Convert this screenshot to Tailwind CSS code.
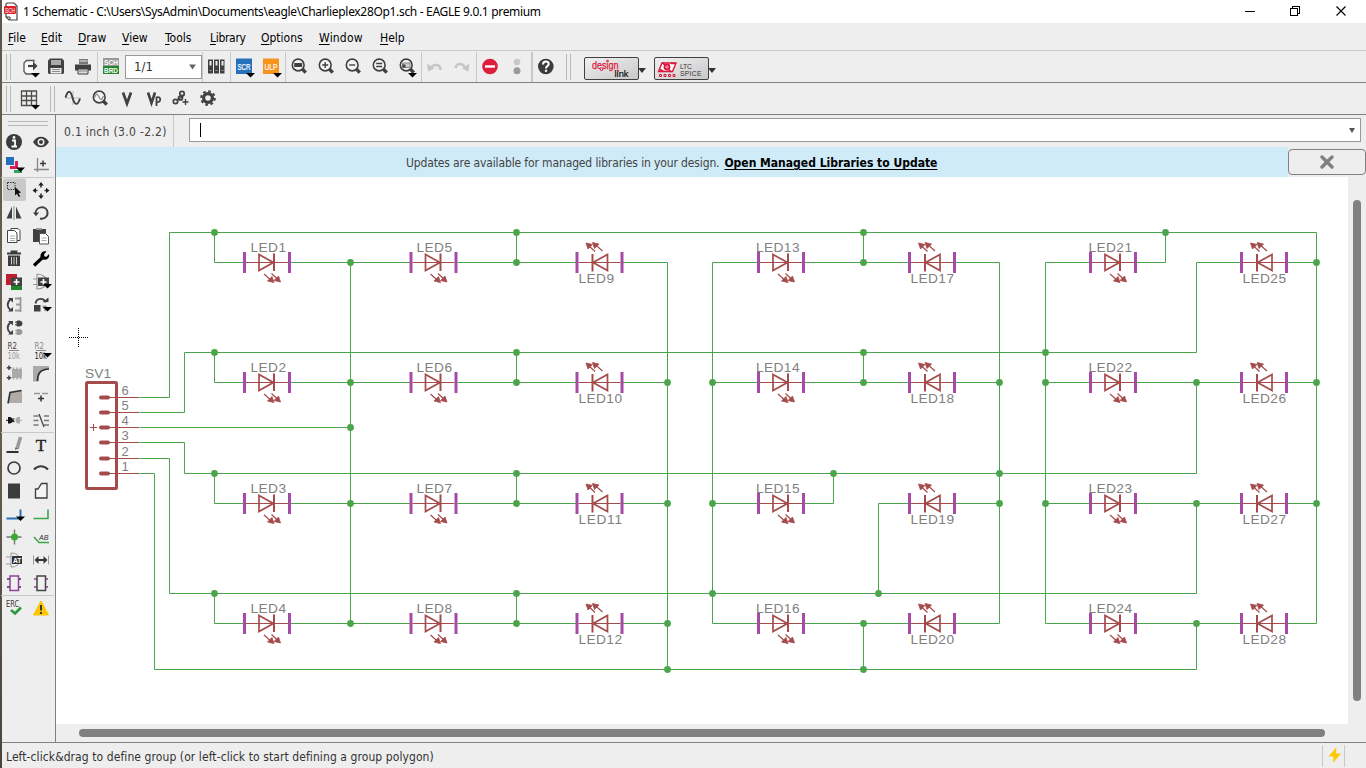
<!DOCTYPE html>
<html lang="en">
<head>
<meta charset="utf-8">
<title>1 Schematic - EAGLE 9.0.1 premium</title>
<script src="https://cdn.jsdelivr.net/npm/@tailwindcss/browser@4"></script>
</head>
<body class="w-[1366px] h-[768px] overflow-hidden bg-[#eeeeee] flex font-['DejaVu_Sans_Condensed','DejaVu_Sans',sans-serif] text-[12px] [font-stretch:condensed] text-black">
<svg width="0" height="0" class="hidden">
  <defs>
    <g id="drop"><path d="M0 0h9l-4.500 4.500z" fill="#000"/></g>
    <g id="lens" fill="none" stroke="#404040"><circle cx="12.200" cy="11.500" r="5.900" stroke-width="1.600" fill="#f4f4f4"/><path d="M16 15.300l3.800 3.800" stroke-width="3.400"/></g>
    <g id="A">
      <path d="M-21 0H21" stroke="#a54b4b"/>
      <path d="M-8-8V8L6.500 0z" fill="none" stroke="#a54b4b" stroke-width="1.700"/>
      <path d="M7-9V8.500" stroke="#a54b4b" stroke-width="2"/>
      <path d="M-3 11.500l9 8M4.500 11l8 7.500" stroke="#a54b4b" stroke-width="1.200"/>
      <path d="M7 20l-6.500-1.500 4.500-4.500zM13.500 19.500l-6.500-1.500 4.500-4.500z" fill="#a54b4b" stroke="#a54b4b" stroke-width=".8"/>
      <path d="M-22.500-10.500v21M22.500-10.500v21" stroke="#a54ba5" stroke-width="3"/>
    </g>
  </defs>
</svg>

<div class="w-[2px] shrink-0 h-full bg-linear-to-b from-[#5d554c] via-[#6b6055] to-[#4b443d]"></div>
<div class="flex flex-col w-[1364px] h-full">

  <header class="h-[23px] shrink-0 bg-white flex items-center pl-[2px]">
    <svg width="16" height="20" viewBox="0 0 16 20"><path d="M3 1h7l3 3v14H5l-3-3V2z" fill="#fff" stroke="#444" stroke-width="1.200"/><path d="M2 15h4v3" fill="none" stroke="#444"/><rect x="0" y="4" width="12" height="8" rx="1" fill="#d9222a"/><text x="1" y="10.500" font-size="6.500" fill="#fff" font-family="Liberation Sans" textLength="10" lengthAdjust="spacingAndGlyphs">SCH</text></svg>
    <span id="title" class="ml-[3px] pt-px font-['Noto_Sans',sans-serif] text-[12px] leading-[22px] whitespace-nowrap tracking-[-0.325px]">1 Schematic - C:\Users\SysAdmin\Documents\eagle\Charlieplex28Op1.sch - EAGLE 9.0.1 premium</span>
    <div class="ml-auto flex">
      <svg width="130" height="22" viewBox="1236 0 130 22" fill="none" stroke="#000" shape-rendering="crispEdges"><path d="M1245 10.500h10M1290.500 7.500h7v7h-7zM1292.500 7v-1.500h7v7h-1.500"/><path d="M1336.500 5.500l9 9M1345.500 5.500l-9 9" shape-rendering="auto" stroke-width="1.200"/></svg>
    </div>
  </header>

  <nav class="h-[28px] shrink-0 flex items-center pl-[6px] pt-[3px] border-b border-[#c8c8c8] underline-offset-2">
    <span class="w-[33px]"><u>F</u>ile</span><span class="w-[37px]"><u>E</u>dit</span><span class="w-[44px]"><u>D</u>raw</span><span class="w-[43px]"><u>V</u>iew</span><span class="w-[45px]"><u>T</u>ools</span><span class="w-[51px] tracking-[-0.3px]"><u>L</u>ibrary</span><span class="w-[58px]"><u>O</u>ptions</span><span class="w-[61px] tracking-[0.2px]"><u>W</u>indow</span><span><u>H</u>elp</span>
  </nav>

  <div class="h-[32px] shrink-0 flex items-center border-b border-[#808080]">
    <div class="ml-[4px] w-[5px] mr-[5px] h-[26px] border-x border-[#b8b8b8]"></div>
    <svg width="27" height="30" viewBox="0 0 27 30"><path d="M18 10V8.500H10.500L8 11v8.500L10 22h7" fill="#fafafa" stroke="#555" stroke-width="1.300"/><path d="M12 14h7" stroke="#404040" stroke-width="2.200"/><path d="M17 9.500l4.500 4.500-4.500 4.500z" fill="#404040"/><use href="#drop" x="15" y="21"/></svg>
    <svg width="27" height="30" viewBox="0 0 27 30"><path d="M7 6.500h12l2 2v12.500l-1 1H6l-1-1V8.500z" fill="#404040"/><path d="M8 8h10v5H8z" fill="#aaa"/><path d="M7.500 16h11v5.500h-11z" fill="#eee"/><path d="M9 17.500h8M9 19.500h8" stroke="#888"/></svg>
    <svg width="27" height="30" viewBox="0 0 27 30"><path d="M9 7h9v5H9z" fill="#777"/><path d="M9.500 9h8" stroke="#eee"/><path d="M5 12.500h16v6H5z" fill="#404040"/><path d="M8 17h10v5H8z" fill="#ddd" stroke="#404040"/><path d="M9 19h8" stroke="#888"/></svg>
    <div class="w-px h-[30px] bg-[#c8c8c8]"></div>
    <svg width="27" height="30" viewBox="0 0 27 30" font-family="Liberation Sans" font-weight="bold" fill="#fff"><path d="M5 6h16v8H5z" fill="#999"/><path d="M5 14h16v8H5z" fill="#23862b"/><text x="6" y="13" font-size="8" textLength="14" lengthAdjust="spacingAndGlyphs">SCH</text><text x="6" y="21" font-size="8" textLength="14" lengthAdjust="spacingAndGlyphs">BRD</text></svg>
    <div class="w-[77px] h-[24px] bg-white border border-[#999] flex items-center justify-between pl-[8px] pr-[5px] text-[13px] text-[#333]"><span>1/1</span><svg width="7" height="6" viewBox="0 0 7 6"><path d="M0 .5h7L3.500 5.500z" fill="#666"/></svg></div>
    <div class="w-px h-[30px] bg-[#c8c8c8]"></div>
    <svg width="27" height="30" viewBox="0 0 27 30"><path d="M5 7.500h5v14H5zM11 7.500h5v14h-5zM17 7.500h4.500v14H17z" fill="#404040"/><path d="M6.500 9h2v4.500h-2zM12.500 9h2v4.500h-2zM18.500 9h2v4.500h-2z" fill="#eee"/><path d="M6.500 18.500h2M12.500 18.500h2M18.500 18.500h2" stroke="#999"/></svg>
    <div class="w-px h-[30px] bg-[#c8c8c8]"></div>
    <svg width="27" height="30" viewBox="0 0 27 30"><path d="M5 6.500h16V22H5z" fill="#2671b9"/><text x="6.500" y="17.500" font-family="Liberation Sans" font-size="9" fill="#fff" stroke="#fff" stroke-width=".2" textLength="13" lengthAdjust="spacingAndGlyphs">SCR</text><use href="#drop" x="15" y="21"/></svg>
    <svg width="27" height="30" viewBox="0 0 27 30"><path d="M5 6.500h16V22H5z" fill="#f7941d"/><text x="6.500" y="17.500" font-family="Liberation Sans" font-size="9" fill="#fff" stroke="#fff" stroke-width=".2" textLength="13" lengthAdjust="spacingAndGlyphs">ULP</text><use href="#drop" x="15" y="21"/></svg>
    <div class="w-px h-[30px] bg-[#c8c8c8]"></div>
    <svg width="27" height="30" viewBox="0 0 27 30"><g transform="translate(0 1.500)"><use href="#lens"/><path d="M8.200 9.500h8v4h-8z" fill="#404040"/></g></svg>
    <svg width="27" height="30" viewBox="0 0 27 30"><g transform="translate(0 1.500)"><use href="#lens"/><path d="M9.200 11.500h6M12.200 8.500v6" stroke="#404040" stroke-width="1.400"/></g></svg>
    <svg width="27" height="30" viewBox="0 0 27 30"><g transform="translate(0 1.500)"><use href="#lens"/><path d="M9.200 11.500h6" stroke="#404040" stroke-width="1.400"/></g></svg>
    <svg width="27" height="30" viewBox="0 0 27 30"><g transform="translate(0 1.500)"><use href="#lens"/><path d="M9.200 10h6M9.200 13h6" stroke="#404040" stroke-width="1.400"/></g></svg>
    <svg width="27" height="30" viewBox="0 0 27 30"><g transform="translate(0 1.500)"><use href="#lens"/><path d="M8.500 9.500h7.500v4.500h-7.500z" fill="#ccc" stroke="#888"/><path d="M8.500 11h3v3h-3z" fill="#404040"/></g><use href="#drop" x="14" y="21"/></svg>
    <div class="w-px h-[30px] bg-[#c8c8c8]"></div>
    <svg width="27" height="30" viewBox="0 0 27 30"><path d="M18.500 18c0-6-7-6.500-9.500-2" fill="none" stroke="#c6c6c6" stroke-width="2.600"/><path d="M5 11.500l1 8 6.500-3z" fill="#c6c6c6"/></svg>
    <svg width="27" height="30" viewBox="0 0 27 30"><path d="M6.500 16c1-5 7-5.500 9.500-.5" fill="none" stroke="#c6c6c6" stroke-width="2.600"/><path d="M20.500 11.500l-1 8-6.500-3z" fill="#c6c6c6"/></svg>
    <div class="w-px h-[30px] bg-[#c8c8c8]"></div>
    <svg width="27" height="30" viewBox="0 0 27 30"><circle cx="13" cy="14.500" r="7.800" fill="#dc1f3c"/><path d="M8 14.500h10" stroke="#fff" stroke-width="2.400"/></svg>
    <svg width="27" height="30" viewBox="0 0 27 30"><circle cx="13" cy="10" r="3.300" fill="#c8c8c8"/><circle cx="13" cy="18.700" r="3.500" fill="#9a9a9a"/></svg>
    <div class="w-[2px] h-[30px] bg-[#c8c8c8]"></div>
    <svg width="27" height="30" viewBox="0 0 27 30"><circle cx="12.800" cy="14.500" r="7.800" fill="#3c3c3c"/><path d="M10 12.500c0-4 6-3.800 5.700-.4-.2 2-2.700 2-2.700 4.400" fill="none" stroke="#fff" stroke-width="2.100"/><path d="M11.900 17.800h2.200v2h-2.200z" fill="#fff"/></svg>
    <div class="ml-[6px] w-[5px] h-[26px] border-x border-[#b8b8b8]"></div>
    <div class="ml-[13px] mt-[4px] w-[55px] h-[23px] border border-[#404040] rounded-[2px] bg-linear-to-br from-[#f0f0f0] to-[#c9c9c9]">
      <svg width="53" height="21" viewBox="0 0 53 21" font-family="Liberation Sans"><text x="7" y="11" font-size="11" fill="#dc143c" stroke="#dc143c" stroke-width=".25" textLength="26.500" lengthAdjust="spacingAndGlyphs">design</text><text x="29.500" y="18.800" font-size="9" fill="#111" textLength="14" lengthAdjust="spacingAndGlyphs" stroke="#111" stroke-width=".2">link</text><path d="M14.500 10.500l2 2.500 2-2.500" stroke="#dc143c" fill="none"/><circle cx="22.500" cy="3" r="1" fill="none" stroke="#dc143c" stroke-width=".8"/><circle cx="33" cy="13" r="1" fill="#dc143c"/></svg>
    </div>
    <svg class="-ml-px mt-[7px]" width="8" height="5" viewBox="0 0 8 5"><path d="M0 0h8L4 5z" fill="#333"/></svg>
    <div class="ml-[8px] mt-[4px] w-[55px] h-[23px] border border-[#404040] rounded-[2px] bg-linear-to-br from-[#f0f0f0] to-[#c9c9c9]">
      <svg width="53" height="21" viewBox="0 0 53 21"><path d="M7 5h14l-3.500 8.500H3.500z" fill="#fff" stroke="#dc143c" stroke-width="1.400"/><path d="M7.500 4.500L16 14M5 11.500l3.500 2M16 5.500h4.500" stroke="#dc143c" stroke-width="1.700"/><circle cx="12" cy="9" r="2.600" fill="#e88" stroke="#dc143c" stroke-width="1.600"/><path d="M4.500 16.500h2v2h-2zM9 16.500h2v2H9zM13.500 16.500h2v2h-2zM18 16.500h2v2h-2z" fill="none" stroke="#dc143c"/><text x="25" y="11" font-family="Liberation Sans" font-size="6.800" fill="#333" textLength="12">LTC</text><text x="25" y="18.300" font-family="Liberation Sans" font-size="6.800" fill="#333" textLength="21.500">SPICE</text></svg>
    </div>
    <svg class="-ml-px mt-[7px]" width="8" height="5" viewBox="0 0 8 5"><path d="M0 0h8L4 5z" fill="#333"/></svg>
  </div>

  <div class="h-[32px] shrink-0 flex items-center border-b border-[#808080]">
    <div class="ml-[4px] w-[5px] mr-[5px] h-[26px] border-x border-[#b8b8b8]"></div>
    <svg width="27" height="30" viewBox="0 0 27 30"><path d="M5.500 7h15v14.500h-15zM10.500 7v15M15.500 7v15M5 12h16M5 16.500h16" fill="none" stroke="#4a4f47" stroke-width="1.300"/><use href="#drop" x="15" y="21"/></svg>
    <div class="ml-[7px] w-[5px] mr-[5px] h-[26px] border-x border-[#b8b8b8]"></div>
    <svg width="27" height="30" viewBox="0 0 27 30"><path d="M5 14h16M13 7v14" stroke="#bbb"/><path d="M5.500 13.500C8 5.500 10.500 6 12.500 13.500s5 9 7.500 1" fill="none" stroke="#404040" stroke-width="1.900"/></svg>
    <svg width="27" height="30" viewBox="0 0 27 30"><g transform="translate(0 1.500)"><use href="#lens"/><path d="M7.500 12c2-5 3-4 4.500-.5s3 3 4.500-1" fill="none" stroke="#888" stroke-width="1.200"/></g></svg>
    <svg width="27" height="30" viewBox="0 0 27 30"><path d="M9 8.500l4 11 4-11" fill="none" stroke="#404040" stroke-width="2.700"/></svg>
    <svg width="27" height="30" viewBox="0 0 27 30"><path d="M7 8.500l3.500 10.500L14 8.500" fill="none" stroke="#404040" stroke-width="2.600"/><path d="M15.500 22v-9.500M15.500 13.500c5-2 5 6 0 4.500" fill="none" stroke="#404040" stroke-width="1.800"/></svg>
    <svg width="27" height="30" viewBox="0 0 27 30" fill="none" stroke="#404040" stroke-width="1.700"><circle cx="14" cy="9.500" r="2.200"/><circle cx="12.500" cy="14" r="2"/><circle cx="7.500" cy="17.500" r="2.200"/><path d="M9.500 16l7-5M17.500 15v6M14.500 18h6" stroke-width="1.400"/></svg>
    <svg width="27" height="30" viewBox="0 0 27 30"><circle cx="13" cy="14" r="4.400" fill="none" stroke="#404040" stroke-width="3.200"/><circle cx="13" cy="14" r="6.700" fill="none" stroke="#404040" stroke-width="2.200" stroke-dasharray="2.650 2.610"/></svg>
  </div>

  <div class="h-[627px] shrink-0 flex">
    <aside class="w-[54px] shrink-0 border-r border-[#808080]">
      <div class="h-[15px] pt-[6px] pl-[6px]"><div class="w-[40px] h-[5px] border-y border-[#b8b8b8]"></div></div>
      <div class="w-[54px] -ml-px grid grid-cols-2">
        <svg width="27" height="23" viewBox="0 0 27 23"><circle cx="13" cy="12" r="8" fill="#3c3c3c"/><path d="M11 10.500h3v5.500M10.500 16.500h5.500" stroke="#fff" stroke-width="1.800" fill="none"/><circle cx="13" cy="7.500" r="1.400" fill="#fff"/></svg>
        <svg width="27" height="23" viewBox="0 0 27 23"><path d="M5 12c4-7 12-7 16 0-4 7-12 7-16 0z" fill="#3c3c3c"/><circle cx="13" cy="12" r="3.500" fill="#eee"/><circle cx="13" cy="12" r="2" fill="#3c3c3c"/></svg>
        <svg width="27" height="23" viewBox="0 0 27 23"><path d="M5 4h8v8H5z" fill="#2671b9"/><path d="M14 8h3v5h-3zM9 13h8v3H9z" fill="#dc1f5c"/><path d="M18 14v2M13 17h8v3h-8z" fill="#2ea55a"/><use href="#drop" x="15" y="14.500"/></svg>
        <svg width="27" height="23" viewBox="0 0 27 23"><path d="M9.500 5v14M6 16.500h15" stroke="#888" stroke-width="1.300"/><path d="M15 7.500v6M12 10.500h6" stroke="#3c3c3c" stroke-width="1.500"/></svg>
        <div class="col-span-2 h-[2px] flex items-end"><div class="w-[53px] h-px bg-[#c8c8c8]"></div></div>
        <svg width="27" height="23" viewBox="0 0 27 23"><rect x="2" y="0.500" width="23" height="22.500" rx="2" fill="#c9c9c9"/><path d="M6.500 4.500h7.500v7h-7.500z" fill="none" stroke="#333" stroke-dasharray="1.500 1"/><path d="M14 9v8.500l2-1.800 1.800 3.300 1.400-.8-1.600-3 2.400-.6z" fill="#111"/></svg>
        <svg width="27" height="23" viewBox="0 0 27 23"><path d="M13 6v3.500M13 15.500v3M7 12.500h2.500M16.500 12.500h3" stroke="#333" stroke-width="1.600"/><path d="M10.300 7.500h5.400L13 4zM10.300 17.500h5.400L13 21zM8 9.800v5.400L4.500 12.500zM18 9.800v5.400l3.500-2.700z" fill="#222"/></svg>
        <svg width="27" height="23" viewBox="0 0 27 23"><path d="M11 5.500v12H5.500z" fill="#404040"/><path d="M15 5.500v12h5.500z" fill="#404040"/><path d="M13 5v14" stroke="#aaa" stroke-width="1.400"/></svg>
        <svg width="27" height="23" viewBox="0 0 27 23"><path d="M7.500 13c-.5-8 11-9 12-2 .6 5-4 7.500-7.500 6.500" fill="none" stroke="#404040" stroke-width="1.900"/><path d="M5 11.500h6l-3 3.800z" fill="#404040"/></svg>
        <svg width="27" height="23" viewBox="0 0 27 23"><path d="M10 4.500h7l2 2v10h-9z" fill="#fff" stroke="#444"/><path d="M6.500 6.500h7l2.500 2.500v9.500H6.500z" fill="#fff" stroke="#444"/><path d="M9 12h5M9 14.500h5M9 16.500h5" stroke="#aaa"/></svg>
        <svg width="27" height="23" viewBox="0 0 27 23"><path d="M5 5h13v13H5z" fill="#404040"/><path d="M8 4h6v2H8z" fill="#999"/><path d="M11.500 9.500h6l3 3v7.500h-9z" fill="#fff" stroke="#555"/><path d="M13.500 14h5M13.500 16.500h5" stroke="#aaa"/></svg>
        <svg width="27" height="23" viewBox="0 0 27 23"><path d="M6 6.500h14M10.500 6V4.500h5V6" fill="none" stroke="#3c3c3c" stroke-width="1.800"/><path d="M7 8.500h12V19H7z" fill="#3c3c3c"/><path d="M10.500 10v7.500M13 10v7.500M15.500 10v7.500" stroke="#ccc" stroke-width="1"/></svg>
        <svg width="27" height="23" viewBox="0 0 27 23"><path d="M6 18.500l8-7.500" stroke="#000" stroke-width="3.200"/><path d="M18.500 4.500l-2.500 3 .5 2 2 .3 2.500-2.800c1 4-2 6.500-6 5.500l-2.500-2.500c-.5-4 2.500-6.500 6-5.500z" fill="#000"/></svg>
        <svg width="27" height="23" viewBox="0 0 27 23"><path d="M5 4h11v11H5z" fill="#be1e2d"/><path d="M10 15h11v5H10z" fill="#23862b"/><path d="M10 7.500h11V16H10z" fill="#404040"/><path d="M15.500 9v6M12.500 12h6" stroke="#fff" stroke-width="1.600"/></svg>
        <svg width="27" height="23" viewBox="0 0 27 23"><path d="M5 9h4M5 14.500h4M9 4v15c7 0 10-4 10-7.500S15 4 9 4" stroke="#999" fill="none" stroke-width="1.200"/><path d="M10 7.500h11V16H10z" fill="#404040"/><path d="M15.500 9v6M12.500 12h6" stroke="#fff" stroke-width="1.600"/><use href="#drop" x="15" y="14"/></svg>
        <svg width="27" height="23" viewBox="0 0 27 23"><path d="M9.500 6.500c-4 3-3.500 8 0 10.500" fill="none" stroke="#404040" stroke-width="1.800"/><path d="M7 5h5v4.500zM7 18.500h5v-4.500z" fill="#404040"/><path d="M19.500 4v15M14 5.500h5M15 11.500h4M14 17.500h5" stroke="#999" stroke-width="1.800"/></svg>
        <svg width="27" height="23" viewBox="0 0 27 23"><path d="M7.500 10.500c1-6 8.500-6 10-1" fill="none" stroke="#404040" stroke-width="1.900"/><path d="M14.500 9h6V4.500z" fill="#404040"/><path d="M6 12h6.500v6.500H6z" fill="#404040"/><path d="M14 12.500h4l3 3-4 3z" fill="#999"/><use href="#drop" x="15" y="14"/></svg>
        <svg width="27" height="23" viewBox="0 0 27 23"><path d="M9.500 6.500c-4 3-3.500 8 0 10.500" fill="none" stroke="#404040" stroke-width="1.800"/><path d="M7 5h5v4.500zM7 18.500h5v-4.500z" fill="#404040"/><path d="M16 5h2.500a2.500 2.500 0 010 5H16zM14 6.200h2M14 8.800h2" fill="#404040" stroke="#404040"/><path d="M16 13.500h2.500a2.500 2.500 0 010 5H16zM14 14.700h2M14 17.300h2" fill="#999" stroke="#999"/></svg>
        <div></div>
        <svg width="27" height="23" viewBox="0 0 27 23" font-family="DejaVu Sans"><text x="6.500" y="9.500" font-size="8" fill="#444" textLength="9.500" lengthAdjust="spacingAndGlyphs">R2</text><path d="M8 11.500h10" stroke="#888"/><text x="6.500" y="20" font-size="8" fill="#999" textLength="12.500" lengthAdjust="spacingAndGlyphs">10k</text></svg>
        <svg width="27" height="23" viewBox="0 0 27 23" font-family="DejaVu Sans"><text x="6.500" y="9.500" font-size="8" fill="#888" textLength="9.500" lengthAdjust="spacingAndGlyphs">R2</text><path d="M8 11.500h10" stroke="#888"/><text x="6.500" y="20" font-size="8" fill="#222" textLength="12.500" lengthAdjust="spacingAndGlyphs">10k</text><use href="#drop" x="15" y="14"/></svg>
        <svg width="27" height="23" viewBox="0 0 27 23"><path d="M11 7h10v9H11z" fill="#aaa"/><path d="M12.500 5.500v12M16 5.500v12M19.500 5.500v12" stroke="#aaa" stroke-width="1.500"/><path d="M8 3.500v4.500M5.800 5.800h4.500M8 13.500V18M5.800 15.800h4.500" stroke="#404040" stroke-width="1.500"/></svg>
        <svg width="27" height="23" viewBox="0 0 27 23"><path d="M5 4h16v3c-8 0-10 4-10.500 12.500H5z" fill="#a9a9a9"/><path d="M9.500 19c0-8 3-11.500 11.500-12" fill="none" stroke="#333" stroke-width="1.700"/></svg>
        <svg width="27" height="23" viewBox="0 0 27 23"><path d="M9 7.500L21 5.500V18H7z" fill="#b0aaa8"/><path d="M7 18.500l2-11L20.500 5.500" fill="none" stroke="#333" stroke-width="1.600"/></svg>
        <svg width="27" height="23" viewBox="0 0 27 23"><path d="M6 8.500h6M14 8.500h6" stroke="#999" stroke-width="1.300"/><path d="M13 10.500v6M10 13.500h6" stroke="#333" stroke-width="1.500"/></svg>
        <svg width="27" height="23" viewBox="0 0 27 23"><path d="M7 9h1.500c2 0 3 1.500 3 3.300s-1 3.300-3 3.300H7z" fill="#111"/><path d="M5 12.300h8M10.500 11h3M10.500 13.600h3" stroke="#111"/><path d="M19 9h-1.500c-2 0-3 1.500-3 3.300s1 3.300 3 3.300H19zM19 11.800h2v1h-2z" fill="#aaa"/></svg>
        <svg width="27" height="23" viewBox="0 0 27 23"><path d="M5.500 8h5M5.500 12.500h5M5.500 17h5M16 8h5M16 12.500h5M16 17h5" stroke="#777" stroke-width="1.400"/><path d="M11 6l5 13" stroke="#444" stroke-width="1.300"/></svg>
        <div class="col-span-2 h-[2px] flex items-end"><div class="w-[53px] h-px bg-[#c8c8c8]"></div></div>
        <svg width="27" height="23" viewBox="0 0 27 23"><path d="M5.500 19h12" stroke="#000" stroke-width="1.600"/><path d="M19.500 4l-3.500 12" stroke="#999" stroke-width="3.500"/><path d="M14 17l.5-2.500 2 1z" fill="#555"/></svg>
        <svg width="27" height="23" viewBox="0 0 27 23"><text x="13" y="17.500" font-size="17" text-anchor="middle" font-family="Liberation Serif" fill="#222" stroke="#222" stroke-width=".4">T</text></svg>
        <svg width="27" height="23" viewBox="0 0 27 23"><circle cx="13" cy="12" r="6" fill="none" stroke="#3c3c3c" stroke-width="1.700"/></svg>
        <svg width="27" height="23" viewBox="0 0 27 23"><path d="M6 13.500c4-4.500 10-4.500 14 0" fill="none" stroke="#3c3c3c" stroke-width="2"/></svg>
        <svg width="27" height="23" viewBox="0 0 27 23"><path d="M7 4.500h12v15H7z" fill="#3c3c3c"/></svg>
        <svg width="27" height="23" viewBox="0 0 27 23"><path d="M13.500 4.500h5.500v14.500H7.500V10h2.500z" fill="#f4f4f4" stroke="#3c3c3c" stroke-width="1.300"/></svg>
        <svg width="27" height="23" viewBox="0 0 27 23"><path d="M5.500 16.500h14V7.500" fill="none" stroke="#2671b9" stroke-width="2"/><use href="#drop" x="15" y="14.500"/></svg>
        <svg width="27" height="23" viewBox="0 0 27 23"><path d="M5.500 16.500H20V7.500" fill="none" stroke="#3aa648" stroke-width="1.600"/></svg>
        <svg width="27" height="23" viewBox="0 0 27 23"><path d="M5.500 12h15M13.500 4.500v15" stroke="#777" stroke-width="1.400"/><circle cx="13.500" cy="12" r="3.500" fill="#3aaa35"/></svg>
        <svg width="27" height="23" viewBox="0 0 27 23"><path d="M6 12l5 5.500h10" fill="none" stroke="#3aa648" stroke-width="1.500"/><text x="11" y="15" font-size="8" font-family="Liberation Sans" font-style="italic" fill="#333" textLength="9.500" lengthAdjust="spacingAndGlyphs">AB</text></svg>
        <svg width="27" height="23" viewBox="0 0 27 23"><path d="M5 9h5M5 16h5M10 5v14c5 0 8-2 10-7-2-5-5-7-10-7" fill="none" stroke="#999"/><path d="M11 8h10v8H11z" fill="#333"/><text x="12" y="15" font-size="7.500" font-weight="bold" font-family="Liberation Sans" fill="#fff" textLength="8.500" lengthAdjust="spacingAndGlyphs">AT</text></svg>
        <svg width="27" height="23" viewBox="0 0 27 23"><path d="M5.500 7.500v9M20.500 7.500v9" stroke="#999"/><path d="M9 12h8" stroke="#333" stroke-width="2"/><path d="M10.500 8v8l-4-4zM15.500 8v8l4-4z" fill="#333"/></svg>
        <svg width="27" height="23" viewBox="0 0 27 23"><path d="M6 8h3M6 16h3M17 8h3M17 16h3" stroke="#333" stroke-width="1.500"/><path d="M9 5h8.500v14.500H9z" fill="#f0f0f0" stroke="#92409a" stroke-width="1.500"/></svg>
        <svg width="27" height="23" viewBox="0 0 27 23"><path d="M6 8h3M6 16h3M17 8h3M17 16h3" stroke="#92409a" stroke-width="1.500"/><path d="M9 5h8.500v14.500H9z" fill="#f0f0f0" stroke="#444" stroke-width="1.500"/></svg>
        <div class="col-span-2 h-[2px] flex items-end"><div class="w-[53px] h-px bg-[#c8c8c8]"></div></div>
        <svg width="27" height="23" viewBox="0 0 27 23"><text x="5" y="10.500" font-size="8.500" font-family="DejaVu Sans" fill="#333" textLength="13" lengthAdjust="spacingAndGlyphs">ERC</text><path d="M10 14l4 3.500 6-6" fill="none" stroke="#2c9a3c" stroke-width="2.600"/></svg>
        <svg width="27" height="23" viewBox="0 0 27 23"><path d="M13 5l7.500 14H5.500z" fill="#fdc400" stroke="#fdc400" stroke-linejoin="round"/><path d="M13 9v5.500M13 16v2" stroke="#333" stroke-width="1.900"/></svg>
      </div>
    </aside>

    <main class="w-[1310px] flex flex-col">
      <div class="h-[32px] shrink-0 flex">
        <div class="w-[118px] pl-[8px] border-r border-[#c8c8c8] leading-[35px] text-[#444] whitespace-nowrap"><span id="coord" class="tracking-[0.32px]">0.1 inch (3.0 -2.2)</span></div>
        <div class="ml-[15px] mt-[3px] w-[1172px] h-[24px] bg-white border border-[#999] flex items-center justify-between pl-[10px] pr-[5px]">
          <div class="w-px h-[14px] bg-black"></div>
          <svg width="6" height="5" viewBox="0 0 6 5"><path d="M0 0h6L3 5z" fill="#555"/></svg>
        </div>
      </div>
      <div class="h-[30px] shrink-0 flex">
        <div class="w-[1232px] bg-[#ceebf7] pl-[350px] leading-[32px] text-[#444] whitespace-nowrap"><span id="upd" class="tracking-[-0.13px]">Updates are available for managed libraries in your design.</span><b id="open" class="ml-[5px] text-black underline underline-offset-2">Open Managed Libraries to Update</b></div>
        <div class="mt-[2px] w-[78px] h-[26px] rounded-[4px] border border-[#808080] flex items-center justify-center"><svg width="14" height="14" viewBox="0 0 14 14"><path d="M2 2l10 10M12 2L2 12" stroke="#808080" stroke-width="3.400" stroke-linecap="round"/></svg></div>
      </div>
      <div class="flex h-[547px]">
        <svg id="sheet" class="bg-white shrink-0" width="1292" height="547" viewBox="56 177 1292 547" font-family="Liberation Sans" font-size="13.700" fill="#808080"></svg>
        <div class="w-[18px] pl-[5px] pt-[23px]"><div class="w-[8px] h-[501px] rounded-full bg-[#808080]"></div></div>
      </div>
      <div class="h-[18px] pl-[23px] pt-[5px]"><div class="w-[1246px] h-[8px] rounded-full bg-[#808080]"></div></div>
    </main>
  </div>

  <footer class="h-[26px] shrink-0 border-t border-[#808080] flex items-center pl-[4px] text-[#333]">
    <span id="status" class="whitespace-nowrap pt-[2px] tracking-[0.085px]">Left-click&amp;drag to define group (or left-click to start defining a group polygon)</span>
    <div class="ml-auto mr-[21px] w-[23px] h-[22px] border-x border-[#c8c8c8] flex items-center justify-center"><svg class="ml-[2px] -mt-[2px]" width="14" height="16" viewBox="0 0 14 16"><path d="M8.500 0L.5 9.500h5L5 16l8-9.500H8z" fill="#ffc800"/></svg></div>
  </footer>
</div>

<script>
const G = '#4ba54b', R = '#a54b4b';
const rows = [262, 382, 503, 623];
let wires = '', h = '';
const line = (...p) => { wires += 'M' + p.map(v => v + 0.5).join(' '); };
// nets from the connector
line(139, 397, 169, 397, 169, 232, 1316, 232, 1316, 623);
line(139, 412, 184, 412, 184, 352, 1196, 352, 1196, 262, 1241, 262);
line(139, 427, 350, 427);
line(139, 442, 184, 442, 184, 473, 1196, 473, 1196, 382);
line(139, 458, 169, 458, 169, 593, 1196, 593, 1196, 503);
line(139, 473, 154, 473, 154, 669, 1196, 669, 1196, 623);
// vertical buses
line(350, 262, 350, 623); line(667, 262, 667, 669); line(712, 262, 712, 623);
line(999, 262, 999, 623); line(1045, 262, 1045, 623);
line(863, 232, 863, 262); line(863, 352, 863, 382); line(863, 623, 863, 669);
line(833, 473, 833, 503); line(878, 593, 878, 503); line(1165, 232, 1165, 262);
rows.forEach((y, i) => {
  line(214, y - 30, 214, y, 244, y); line(516, y - 30, 516, y);
  line(290, y, 410, y); line(457, y, 576, y); line(622, y, 667, y); line(712, y, 758, y);
  if (i === 2) { line(803, y, 833, y); line(878, y, 909, y); } else line(803, y, 909, y);
  line(955, y, 999, y); line(1045, y, 1090, y);
  line(1136, y, i ? 1241 : 1165, y); line(1286, y, 1316, y);
});
h += `<path d="${wires}" fill="none" stroke="${G}"/>`;
const nodes = {232: [214, 516, 863, 1165], 262: [350, 516, 863, 1316], 352: [214, 516, 863, 1045],
  382: [350, 516, 667, 712, 863, 999, 1045, 1196, 1316], 427: [350], 473: [214, 516, 833, 999],
  503: [350, 516, 667, 712, 999, 1045, 1196, 1316], 593: [214, 516, 712, 878],
  623: [350, 516, 667, 863, 1196], 669: [667, 863]};
for (const y in nodes) for (const x of nodes[y]) h += `<circle cx="${x + 0.5}" cy="${+y + 0.5}" r="3.4" fill="${G}"/>`;
// LEDs: centre x, flipped, label x
[[267, 0, 250.5], [433.5, 0, 416.5], [599.5, 1, 578.5], [781, 0, 756], [932, 1, 910.5], [1113, 0, 1088.5], [1264, 1, 1242.5]].forEach(([x, f, lx], c) => rows.forEach((y, r) => {
  const n = c * 4 + r + 1;
  h += `<use href="#A" transform="translate(${x} ${y + 0.5})${f ? ' rotate(180)' : ''}"/>`;
  h += `<text x="${lx}" y="${f ? y + 21 : y - 10}" textLength="${n > 9 ? 43.5 : 35.5}">LED${n}</text>`;
}));
// connector
h += `<rect x="86.5" y="382.500" width="30" height="106" fill="none" stroke="${R}" stroke-width="3" rx="1"/>`;
[397, 412, 427, 442, 458, 473].forEach((y, i) => {
  h += `<path d="M108 ${y + 0.5}H139" stroke="${R}"/><rect x="99" y="${y - 1.5}" width="11" height="4" rx="2" fill="${R}"/><text x="121.500" y="${y - 2}" font-size="13">${6 - i}</text>`;
});
h += `<path d="M90 427.500h7M93.500 424v7" stroke="${R}"/><text x="85" y="378" textLength="26">SV1</text>`;
h += `<path d="M69 337.500h19M78.500 328v19" stroke="#000" stroke-dasharray="1 1"/>`;
document.getElementById('sheet').innerHTML = h;
</script>
</body>
</html>
